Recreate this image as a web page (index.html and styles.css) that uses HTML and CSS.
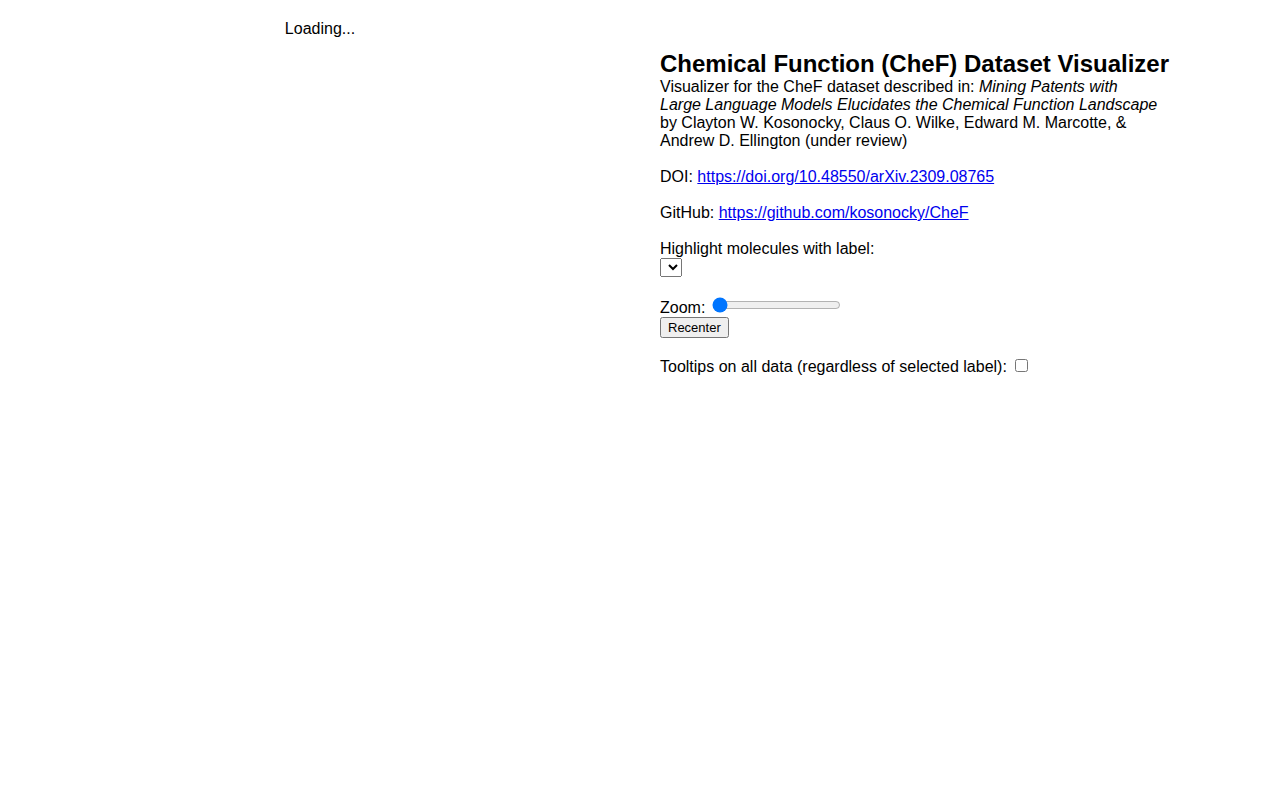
FILE: index.html
```html
<!DOCTYPE html>
<html>
<head>
<meta charset="utf-8">
<title>CheF Dataset Visualizer</title>
<link rel="stylesheet" href="styles.css">
</head>
<body>
<div class="layout">
  <div class="plot">
    <div class="loading">Loading...</div>
  </div>
  <div class="sidebar">
    <div class="title">Chemical Function (CheF) Dataset Visualizer</div>
    <div class="para">Visualizer for the CheF dataset described in: <i>Mining Patents with Large Language Models Elucidates the Chemical Function Landscape</i> by Clayton W. Kosonocky, Claus O. Wilke, Edward M. Marcotte, &amp; Andrew D. Ellington (under review)</div>
    <div class="para">DOI: <a href="#">https://doi.org/10.48550/arXiv.2309.08765</a></div>
    <div class="para">GitHub: <a href="#">https://github.com/kosonocky/CheF</a></div>
    <div class="para">Highlight molecules with label:<br><select class="label-select"><option></option></select></div>
    <div class="para">Zoom: <input class="zoom" type="range" min="1" max="10" value="1"><br><button class="recenter">Recenter</button></div>
    <div class="para">Tooltips on all data (regardless of selected label): <input class="tips" type="checkbox"></div>
  </div>
</div>
</body>
</html>
```
FILE: styles.css
```css
html, body {
  margin: 0;
  padding: 0;
  background: #fff;
}
body {
  font-family: "Liberation Sans", Arial, sans-serif;
  font-size: 16px;
  color: #000;
}
.layout {
  display: flex;
}
.plot {
  width: 640px;
  text-align: center;
  padding-top: 20px;
}
.sidebar {
  width: 500px;
  padding-left: 20px;
  padding-top: 49px;
}
.title {
  font-size: 24px;
  line-height: 29px;
  font-weight: bold;
  white-space: nowrap;
}
.para {
  margin-bottom: 18px;
}
a {
  color: #0000ee;
}
.label-select {
  font-size: 13px;
}
.zoom {
  vertical-align: baseline;
  margin: 2px 2px;
}
.recenter {
  font-family: "Liberation Sans", Arial, sans-serif;
  font-size: 13px;
}
.tips {
  margin: 3px 3px 3px 4px;
}
```
